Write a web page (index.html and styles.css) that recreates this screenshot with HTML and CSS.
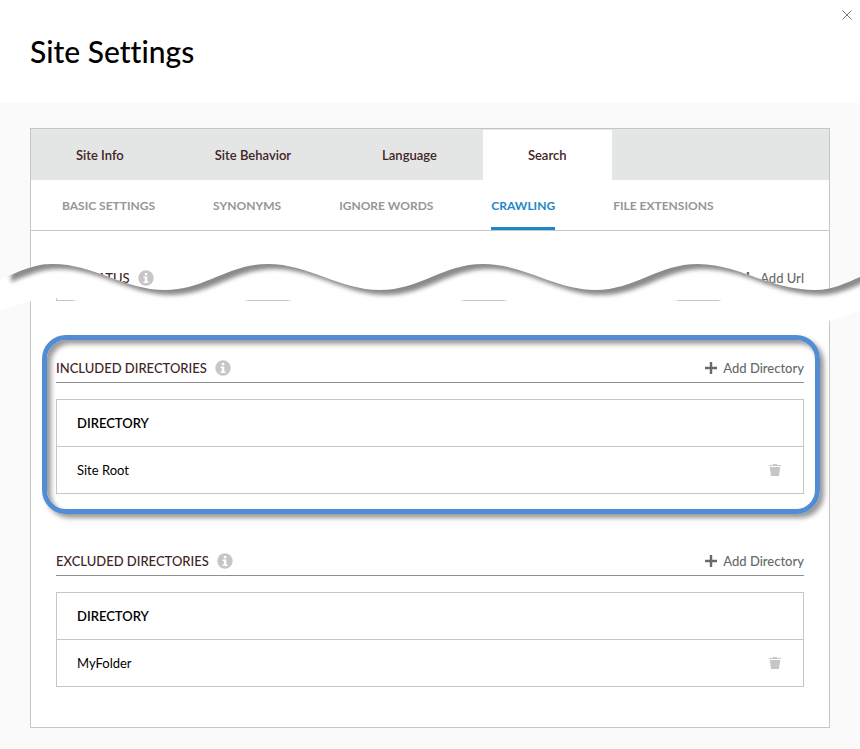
FILE: index.html
```html
<!DOCTYPE html>
<html lang="en">
<head>
<meta charset="utf-8">
<title>Site Settings</title>
<link rel="stylesheet" href="styles.css">
</head>
<body>
<svg class="defs" width="0" height="0" aria-hidden="true">
  <symbol id="info" viewBox="0 0 16 16">
    <circle cx="8" cy="8" r="7.7" fill="#c6c6c6"/>
    <path d="M6.8 2.9h2.5v2.3H6.8zM5.6 6.4h3.7v5h1.2v1.5H5.6v-1.5h1.2V7.9H5.6z" fill="#fff"/>
  </symbol>
  <symbol id="plus" viewBox="0 0 12 12">
    <path d="M4.8 0h2.4v4.8H12v2.4H7.2V12H4.8V7.2H0V4.8h4.8z" fill="#666a69"/>
  </symbol>
  <symbol id="trash" viewBox="0 0 12 12">
    <path d="M4 0h4v1h4v1H0V1h4zM.8 3h10.4L10 12H2z" fill="#c6c6c6"/>
  </symbol>
</svg>

<header class="header">
  <h1 class="title">Site Settings</h1>
  <button class="close" type="button" aria-label="Close">
    <svg width="10" height="10" viewBox="0 0 10 10"><path d="M.5.5l9 9M9.5.5l-9 9" stroke="#777" fill="none"/></svg>
  </button>
</header>

<main class="main">
  <div class="panel">
    <nav class="tabs">
      <a class="tab" href="#">Site Info</a>
      <a class="tab" href="#">Site Behavior</a>
      <a class="tab" href="#">Language</a>
      <a class="tab tab-active" href="#">Search</a>
    </nav>
    <nav class="subtabs">
      <a class="subtab" href="#">BASIC SETTINGS</a>
      <a class="subtab" href="#">SYNONYMS</a>
      <a class="subtab" href="#">IGNORE WORDS</a>
      <a class="subtab subtab-active" href="#">CRAWLING</a>
      <a class="subtab" href="#">FILE EXTENSIONS</a>
    </nav>

    <section class="group group-urls">
      <div class="group-head">
        <h2 class="group-title">URL STATUS</h2>
        <svg class="info"><use href="#info"/></svg>
        <button class="add" type="button"><svg class="plus"><use href="#plus"/></svg>Add Url</button>
      </div>
      <div class="list-end"></div>
    </section>

    <section class="group group-highlight">
      <div class="group-head">
        <h2 class="group-title">INCLUDED DIRECTORIES</h2>
        <svg class="info"><use href="#info"/></svg>
        <button class="add" type="button"><svg class="plus"><use href="#plus"/></svg>Add Directory</button>
      </div>
      <table class="list">
        <thead><tr><th colspan="2">DIRECTORY</th></tr></thead>
        <tbody><tr><td>Site Root</td><td class="actions"><button class="delete" type="button" aria-label="Delete Site Root"><svg class="trash"><use href="#trash"/></svg></button></td></tr></tbody>
      </table>
    </section>

    <section class="group">
      <div class="group-head">
        <h2 class="group-title">EXCLUDED DIRECTORIES</h2>
        <svg class="info"><use href="#info"/></svg>
        <button class="add" type="button"><svg class="plus"><use href="#plus"/></svg>Add Directory</button>
      </div>
      <table class="list">
        <thead><tr><th colspan="2">DIRECTORY</th></tr></thead>
        <tbody><tr><td>MyFolder</td><td class="actions"><button class="delete" type="button" aria-label="Delete MyFolder"><svg class="trash"><use href="#trash"/></svg></button></td></tr></tbody>
      </table>
    </section>
  </div>

  <svg class="tear" viewBox="0 0 860 70" preserveAspectRatio="none" aria-hidden="true">
    <defs>
      <clipPath id="band"><path id="bandShape" d="M0 20L8 16C30 7 38 4 53 4C93 4 125 30 165 30S228 4 268 4S340 30 380 30S443 4 483 4S555 30 595 30S658 4 698 4S770 30 815 30C833 30 848 22 860 17V51C848 55 835 60 815 64C770 64 738 38 698 38S635 64 595 64S523 38 483 38S420 64 380 64S308 38 268 38S205 64 165 64S93 38 53 38C38 38 22 43 0 51z"/></clipPath>
      <filter id="soft" filterUnits="userSpaceOnUse" x="-20" y="-60" width="920" height="140"><feGaussianBlur stdDeviation="2"/></filter>
    </defs>
    <use href="#bandShape" fill="#fff"/>
    <g clip-path="url(#band)">
      <path d="M5 17C30 7 38 4 53 4C93 4 125 30 165 30S228 4 268 4S340 30 380 30S443 4 483 4S555 30 595 30S658 4 698 4S770 30 815 30C833 30 848 22 880 8V-40H5z" transform="translate(6 5)" fill="#8a8a8a" filter="url(#soft)"/>
    </g>
  </svg>
</main>
</body>
</html>
```

FILE: styles.css
```css
* { box-sizing: border-box; }

body {
  margin: 0;
  background: #fafafa;
  color: #000;
  font-family: Lato, "Liberation Sans", sans-serif;
  font-size: 13px;
  font-weight: 500;
  font-variant-ligatures: none;
  line-height: 16px;
}

a { color: inherit; text-decoration: none; }

button {
  padding: 0;
  border: 0;
  background: none;
  font: inherit;
  color: inherit;
  cursor: pointer;
}

svg { display: block; }

.defs { position: absolute; }

.header {
  display: flex;
  justify-content: space-between;
  align-items: flex-start;
  height: 103px;
  padding: 10px 8px 0 30px;
  background: #fff;
}

.title {
  margin: 24px 0 0;
  font-size: 30px;
  line-height: 34px;
  font-weight: 500;
}

.main {
  position: relative;
  padding: 25px 30px 21px;
}

.panel {
  border: 1px solid #c6c6c6;
  background: #fff;
  padding-bottom: 40px;
}

.tabs {
  display: flex;
  gap: 1px;
  padding-top: 1px;
  background: #e4e6e5;
  color: #412426;
}

.tab { padding: 17px 45px; font-weight: 600; }

.tab-active { background: #fff; }

.subtabs {
  display: flex;
  gap: 58px;
  padding: 0 31px;
  border-bottom: 1px solid #c6c6c6;
  color: #969696;
  font-size: 12px;
  font-weight: 700;
}

.subtab {
  padding: 18px 0 13px;
  border-bottom: 3px solid transparent;
}

.subtab-active {
  border-color: #1e87c5;
  color: #1e87c5;
}

.group { padding: 0 25px; }

.group-head {
  display: flex;
  align-items: center;
  height: 30px;
  border-bottom: 1px solid #8f8f8f;
}

.group-title {
  margin: 0;
  color: #412426;
  font-size: 13px;
  font-weight: 500;
}

.info {
  width: 16px;
  height: 16px;
  margin-left: 8px;
}

.add {
  display: flex;
  align-items: center;
  gap: 6px;
  margin-left: auto;
  color: #666a69;
}

.plus { width: 12px; height: 12px; }

.group-urls {
  margin-bottom: 34px;
  padding-top: 32px;
}

.list-end {
  height: 8px;
  border: 1px solid #c6c6c6;
  border-top: 0;
}

.group-highlight {
  margin: 0 9px 32px 11px;
  padding: 13px 11px 15px 9px;
  border: 5px solid #528cd4;
  border-radius: 24px;
  box-shadow: 4px 4px 5px #999, inset 4px 4px 5px #999;
}

.list {
  width: 100%;
  margin-top: 16px;
  border: 1px solid #c6c6c6;
  border-collapse: collapse;
}

.list th,
.list td {
  height: 47px;
  padding: 0 20px;
  border-bottom: 1px solid #c6c6c6;
  text-align: left;
  font-weight: 400;
}

.list th { font-weight: 600; }

.list .actions { width: 60px; padding: 0 22px; }

.delete { display: block; margin-left: auto; }

.trash { width: 12px; height: 12px; }

.tear {
  position: absolute;
  top: 157px;
  left: 0;
  width: 100%;
  height: 70px;
}
```
